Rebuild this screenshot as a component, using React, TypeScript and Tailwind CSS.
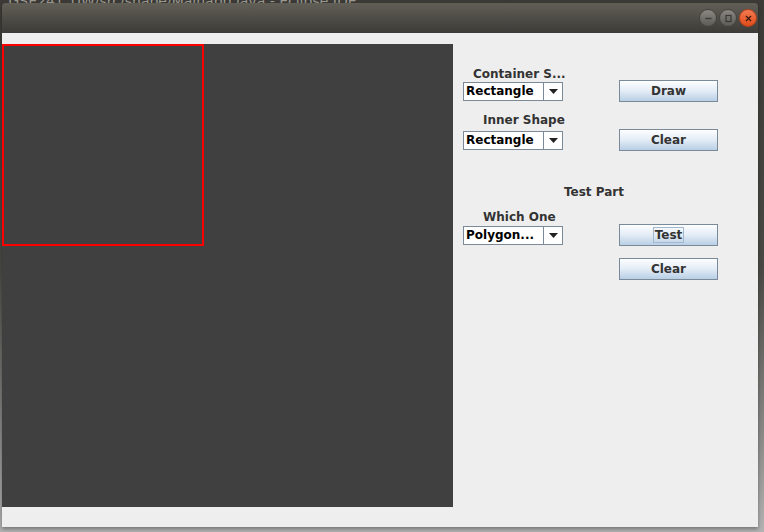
import React from "react";

const font = { fontFamily: '"DejaVu Sans", Verdana, sans-serif' };

// Swing-style combo box
const Combo = ({ value }: { value: string }) => (
  <div className="flex h-[19px] w-[100px] border border-[#7a8a99] bg-white">
    <div className="flex-1 pl-[2px] text-[12px] font-bold leading-[17px] text-black">
      {value}
    </div>
    <div className="flex w-[19px] items-center justify-center border-l border-[#7a8a99] bg-white">
      <svg width="9" height="5" viewBox="0 0 9 5">
        <path d="M0 0 H9 L4.5 5 Z" fill="#222" />
      </svg>
    </div>
  </div>
);

const MetalButton = ({
  label,
  focused = false,
}: {
  label: string;
  focused?: boolean;
}) => (
  <div className="flex h-[22px] w-[99px] items-center justify-center border border-[#7a8a99] bg-gradient-to-b from-[#fdfeff] via-[#e3ecf6] to-[#b8cfe5]">
    <span
      className={
        focused
          ? "border border-[#a3b8cc] px-[1px] text-[12px] font-bold leading-[14px] text-[#333]"
          : "text-[12px] font-bold leading-[14px] text-[#333]"
      }
    >
      {label}
    </span>
  </div>
);

const Label = ({ text, className }: { text: string; className: string }) => (
  <div
    className={`h-[13px] whitespace-nowrap text-[12px] font-bold leading-[15px] text-[#333] ${className}`}
  >
    {text}
  </div>
);

const TitleCircle = ({ kind }: { kind: "min" | "max" | "close" }) => (
  <div
    className={
      kind === "close"
        ? "flex h-[18px] w-[18px] items-center justify-center rounded-full border border-[#b3401a] bg-gradient-to-b from-[#f47a4f] to-[#df4a17]"
        : "flex h-[18px] w-[18px] items-center justify-center rounded-full border border-[#45433e] bg-gradient-to-b from-[#8a8882] to-[#5d5b56]"
    }
  >
    <svg width="9" height="9" viewBox="0 0 9 9">
      {kind === "min" && <path d="M1.5 4.5 H7.5" stroke="#3a3935" strokeWidth="1.3" />}
      {kind === "max" && (
        <rect x="2" y="1.5" width="5" height="6" fill="none" stroke="#3a3935" strokeWidth="1.2" />
      )}
      {kind === "close" && (
        <path d="M2 2 L7 7 M7 2 L2 7" stroke="#3a1a0c" strokeWidth="1.3" />
      )}
    </svg>
  </div>
);

export default function App() {
  return (
    <div className="flex h-[532px] w-[764px] flex-col overflow-hidden bg-[#b3b3b3]" style={font}>
      {/* eclipse window peeking behind */}
      <div className="h-[3px] overflow-hidden bg-[#3c3b37]">
        <div className="-mt-[9px] pl-[4px] text-[14px] text-[#9d9a92]">
          .GSE241_UW/src/shape/Mainapp.java - Eclipse IDE
        </div>
      </div>
      <div className="flex flex-1 bg-gradient-to-b from-[#3c3b37] via-[#4a4945] to-[#b3b3b3]">
        <div className="ml-[2px] flex h-[524px] w-[756px] flex-col shadow-[0_2px_4px_rgba(0,0,0,0.35)]">
          {/* title bar */}
          <div className="flex h-[30px] items-center justify-end gap-[2px] rounded-t-[4px] bg-gradient-to-b from-[#625f57] to-[#3c3b37] pr-[1px]">
            <TitleCircle kind="min" />
            <TitleCircle kind="max" />
            <TitleCircle kind="close" />
          </div>
          {/* frame content */}
          <div className="flex h-[494px] bg-[#eeeeee] pt-[11px]">
            {/* drawing canvas */}
            <div className="h-[463px] w-[451px] bg-[#404040]">
              <div className="h-[202px] w-[202px] border-2 border-[#ff0000]" />
            </div>
            {/* controls */}
            <div className="flex flex-1 flex-col pl-[10px] pt-[23px]">
              <Label text="Container S..." className="ml-[10px]" />
              <div className="flex items-center">
                <Combo value="Rectangle" />
                <div className="ml-[56px]">
                  <MetalButton label="Draw" />
                </div>
              </div>
              <Label text="Inner Shape" className="ml-[20px] mt-[11px]" />
              <div className="mt-[3px] flex items-center">
                <Combo value="Rectangle" />
                <div className="ml-[56px]">
                  <MetalButton label="Clear" />
                </div>
              </div>
              <Label text="Test Part" className="ml-[101px] mt-[34px]" />
              <Label text="Which One" className="ml-[20px] mt-[12px]" />
              <div className="mt-[1px] flex items-center">
                <Combo value="Polygon..." />
                <div className="ml-[56px]">
                  <MetalButton label="Test" focused />
                </div>
              </div>
              <div className="ml-[156px] mt-[12px]">
                <MetalButton label="Clear" />
              </div>
            </div>
          </div>
        </div>
      </div>
    </div>
  );
}
